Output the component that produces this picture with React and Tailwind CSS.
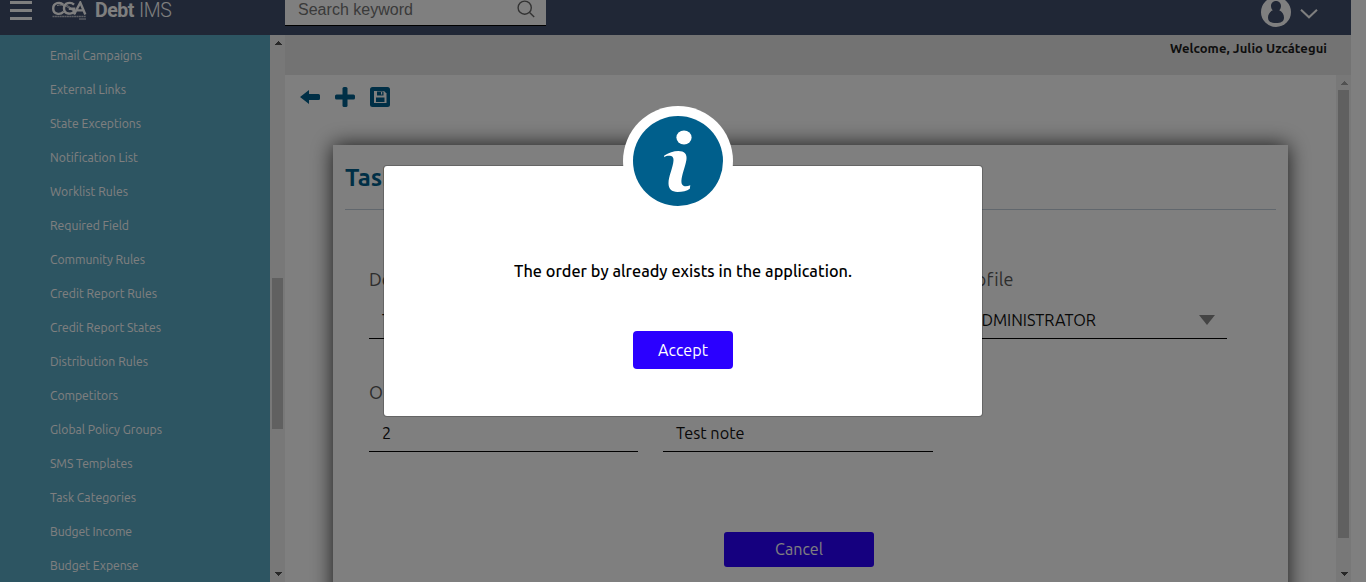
import React from "react";

const sidebarItems = [
  ["Email Campaigns", 92],
  ["External Links", 76],
  ["State Exceptions", 91],
  ["Notification List", 87.5],
  ["Worklist Rules", 78],
  ["Required Field", 79],
  ["Community Rules", 95],
  ["Credit Report Rules", 107],
  ["Credit Report States", 111],
  ["Distribution Rules", 98],
  ["Competitors", 68],
  ["Global Policy Groups", 112],
  ["SMS Templates", 82.5],
  ["Task Categories", 86],
  ["Budget Income", 82],
  ["Budget Expense", 88.5],
];

/* Text set to a known advance width. */
function Fit({ children, width, className = "" }) {
  const ref = React.useRef(null);
  React.useLayoutEffect(() => {
    const el = ref.current;
    const fit = () => {
      el.style.letterSpacing = "0px";
      const natural = el.getBoundingClientRect().width;
      el.style.letterSpacing = `${(width - natural) / children.length}px`;
    };
    fit();
    document.fonts.ready.then(fit);
  }, [children, width]);
  return (
    <span ref={ref} className={`inline-block whitespace-nowrap ${className}`}>
      {children}
    </span>
  );
}

function ArrowUp({ className }) {
  return (
    <svg width="8" height="4" viewBox="0 0 8 4" className={className} shapeRendering="crispEdges">
      <path d="M0 4 4 0l4 4z" fill="currentColor" />
    </svg>
  );
}

function ArrowDown({ className }) {
  return (
    <svg width="8" height="4" viewBox="0 0 8 4" className={className} shapeRendering="crispEdges">
      <path d="M0 0h8L4 4z" fill="currentColor" />
    </svg>
  );
}

function Logo() {
  return (
    <svg width="36" height="20" viewBox="0 0 36 20" className="ml-5 mt-px" fill="none" stroke="white">
      <path d="M11 3.6C8.500 0.700 1.200 1.400 1.200 7.400c0 6 7 7 10.300 3.300" strokeWidth="2.400" />
      <path d="M22 3.600C19 .7 12 1.400 12 7.400c0 6 8 6.500 10.200 3.100V7.700h-5.400" strokeWidth="2.400" />
      <path d="M5 4.500c6-2 13 2 19 8.500M8 3c6-.5 12 4 16 9" strokeWidth=".9" />
      <path d="M22 13.500 28.300 1.600l5 11.900M25 9.400h7" strokeWidth="2.400" />
      <path d="M.5 15.500h33.500" strokeWidth="1.600" strokeDasharray="2 .4" opacity=".65" />
      <path d="M27 18h7" strokeWidth="1.600" opacity=".55" />
    </svg>
  );
}

function Header() {
  return (
    <header className="flex h-[35px] w-[1351px] shrink-0 items-start bg-[#404e6c] text-white">
      <div className="ml-2.5 mt-px flex w-[22px] flex-col gap-[5px]">
        <span className="h-[3px] bg-white" />
        <span className="h-[3px] bg-white" />
        <span className="h-[3px] bg-white" />
      </div>
      <Logo />
      <div className="ml-[7px] flex h-[22px] w-[181px] items-center gap-[5px] font-[Roboto] text-[19.500px] leading-[22px]">
        <Fit width={39} className="font-bold">Debt</Fit>
        <Fit width={32.5} className="[font-weight:350]">IMS</Fit>
      </div>
      <div className="ml-[9px] flex h-[26px] w-[261px] items-start justify-between border-b border-black bg-white pl-[13px] pr-[11px]">
        <span className="font-['Liberation_Sans'] text-[16px] leading-[19px] text-[#757575]">
          <Fit width={115}>Search keyword</Fit>
        </span>
        <svg width="18" height="18" viewBox="0 0 18 18" fill="none" stroke="#666" strokeWidth="1.400">
          <circle cx="7.700" cy="7.700" r="6.600" />
          <path d="m12.600 12.600 4.600 4.400" />
        </svg>
      </div>
      <div className="ml-[715px] flex">
        <svg width="30" height="27" viewBox="0 0 30 27">
          <circle cx="15" cy="12" r="15" fill="white" />
          <path
            d="M15 1c-3 0-5 2.200-5 5 0 2 .7 3.300 1.800 4.300C8.800 11.500 7 14.500 7 17.500 7 21.800 10.300 23 15 23s8-1.200 8-5.500c0-3-1.800-6-4.800-7.200C19.300 9.300 20 8 20 6c0-2.800-2-5-5-5z"
            fill="#404e6c"
          />
        </svg>
        <svg width="18" height="10" viewBox="0 0 18 10" className="ml-[9px] mt-[9px]" fill="none" stroke="white" strokeWidth="2">
          <path d="m1 .8 8 7.500 8-7.500" />
        </svg>
      </div>
    </header>
  );
}

function Sidebar() {
  return (
    <aside className="flex w-[285px] shrink-0">
      <nav className="flex w-[270px] flex-col bg-[#5aaac5] pl-[50px] pt-1">
        {sidebarItems.map(([name, width]) => (
          <a key={name} className="flex h-[34px] shrink-0 items-center text-[12.200px] leading-[34px] text-white">
            <Fit width={width}>{name}</Fit>
          </a>
        ))}
      </nav>
      <div className="flex w-[15px] flex-col items-center bg-[#f1f1f1]">
        <ArrowUp className="mt-1.5 text-[#505050]" />
        <div className="mt-[233px] h-[151px] w-[11px] bg-[#c1c1c1]" />
        <ArrowDown className="mt-[143px] text-[#505050]" />
      </div>
    </aside>
  );
}

function Toolbar() {
  return (
    <div className="flex items-center gap-[15px] pl-[15px] pt-3 text-[#005f8c]">
      <svg width="20" height="20" viewBox="0 0 20 20" fill="currentColor">
        <path d="M0 10 9 3v4h9.500q1.500 0 1.500 1.500v3q0 1.500-1.500 1.500H9v4z" />
      </svg>
      <svg width="20" height="20" viewBox="0 0 20 20" fill="currentColor">
        <rect x="7.500" width="5" height="20" rx="1.500" />
        <rect y="7.500" width="20" height="5" rx="1.500" />
      </svg>
      <svg width="20" height="20" viewBox="0 0 20 20">
        <rect width="20" height="20" rx="2.500" fill="currentColor" />
        <path d="M4 4h10l2.500 2.500V16H4z" fill="white" />
        <path d="M7 4.500h6.500V8.500H7zM6 10.500h8.500V15H6z" fill="currentColor" />
        <path d="M11 5h1.200v2.500H11z" fill="white" />
      </svg>
    </div>
  );
}

function Field({ label, labelWidth, value, valueWidth, select }) {
  return (
    <div>
      <div className="h-[30px] text-[18px] leading-[30px] text-[#5a5a5a]">
        {label && <Fit width={labelWidth}>{label}</Fit>}
      </div>
      <div className="mt-2 flex h-[37px] items-center justify-between border-b border-black pl-[13px] pr-3 text-[16.300px] text-[#111]">
        {value && <Fit width={valueWidth}>{value}</Fit>}
        {select && (
          <svg width="16" height="10" viewBox="0 0 16 10">
            <path d="M0 0h16L8 10z" fill="#888" />
          </svg>
        )}
      </div>
    </div>
  );
}

function TaskCard() {
  return (
    <section className="ml-12 mt-[38px] h-[560px] w-[955px] bg-white px-3 pt-3 shadow-[0_0_20px_rgba(0,0,0,0.8)]">
      <h1 className="h-[53px] border-b border-[#c3cfda] text-[24px] font-semibold leading-[42px] text-[#005f8c]">
        Task
      </h1>
      <div className="grid grid-cols-[269px_270px_269px] gap-x-[25px] gap-y-[38px] pl-6 pt-[54px]">
        <Field label="Description" labelWidth={94} value="Test" valueWidth={30} />
        <Field />
        <Field label="Profile" labelWidth={55} value="ADMINISTRATOR" valueWidth={125} select />
        <Field label="Order By" labelWidth={72} value="2" valueWidth={9} />
        <Field value="Test note" valueWidth={68.500} />
      </div>
      <button className="mt-20 ml-[379px] flex h-[35px] w-[150px] items-center justify-center rounded-[3px] bg-[#2b00ff] pb-px text-[16.100px] text-white">
        Cancel
      </button>
    </section>
  );
}

function Dialog() {
  return (
    <div className="absolute inset-0 flex justify-center bg-black/50">
      <div
        role="dialog"
        className="relative mt-[165px] flex h-[252px] w-[600px] flex-col items-center rounded-[4px] border border-black/20 bg-white bg-clip-padding"
      >
        <svg width="110" height="110" viewBox="0 0 110 110" className="absolute -top-[60px] left-[239px]">
          <circle cx="55" cy="55" r="55" fill="white" />
          <circle cx="55" cy="55" r="45" fill="#005f8c" />
          <ellipse cx="61" cy="31.500" rx="7.600" ry="7" fill="white" />
          <path
            d="M41.300 49.500c4-2.700 9.700-4.500 14-4.500 6 0 9.200 3.200 8.100 9-1.100 6.800-4.800 15-5 21-.1 3.800 1.700 5.300 4.300 5.300 1.500 0 3-.6 4.600-1l-.5 3.400C64 84.800 59.400 86 54.500 86c-5.800 0-9-3.200-9-8.700 0-7 4.500-15.800 5-22.800.2-3.600-1.500-4.700-4.500-4.700-1.800 0-3.300.3-4.900 1.400z"
            fill="white"
          />
        </svg>
        <p className="mt-[93px] text-[16.300px] font-medium leading-6 text-black">
          <Fit width={338}>The order by already exists in the application.</Fit>
        </p>
        <button className="mt-12 flex h-[38px] w-[100px] items-center justify-center rounded-[4px] bg-[#2b00ff] text-[16.100px] text-white">
          Accept
        </button>
      </div>
    </div>
  );
}

export default function App() {
  return (
    <div className="relative flex h-[582px] w-[1366px] flex-col overflow-hidden bg-white font-['Ubuntu','Noto_Sans',sans-serif]">
      <Header />
      <div className="flex h-[547px] w-[1351px]">
        <Sidebar />
        <main className="flex min-w-0 flex-1 flex-col">
          <div className="flex h-10 shrink-0 justify-end bg-[#e6e6e6] pr-6 pt-[3px] text-[13px] font-bold leading-5 text-[#1c1c1c]">
            <Fit width={157}>Welcome, Julio Uzcátegui</Fit>
          </div>
          <div className="flex min-h-0 flex-1">
            <div className="w-[1051px] overflow-hidden">
              <Toolbar />
              <TaskCard />
            </div>
            <div className="flex w-[15px] flex-col items-center bg-[#f1f1f1]">
              <ArrowUp className="mt-1.5 text-[#a3a3a3]" />
              <div className="mt-[5px] h-[448px] w-[11px] bg-[#c1c1c1]" />
              <ArrowDown className="mt-[34px] text-[#505050]" />
            </div>
          </div>
        </main>
      </div>
      <Dialog />
    </div>
  );
}
